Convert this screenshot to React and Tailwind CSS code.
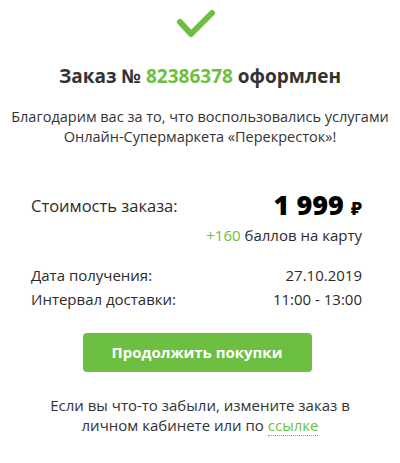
import React from 'react'

const font = { fontFamily: '"Open Sans", "Noto Sans", sans-serif' }

function Check() {
  return (
    <svg width="44" height="34" viewBox="0 0 44 34" className="block">
      <path d="M5 14 L16 26 L37 5" fill="none" stroke="#6cbf40" strokeWidth="6" strokeLinecap="round" strokeLinejoin="round" />
    </svg>
  )
}

function Row({ label, value }) {
  return (
    <div className="flex justify-between text-[15px] leading-6 text-[#2b2b2b]">
      <span>{label}</span>
      <span>{value}</span>
    </div>
  )
}

export default function App() {
  return (
    <div className="w-[400px] h-[463px] bg-white text-[#333]" style={font}>
      <div className="flex justify-center pt-[8px] pr-[6px]">
        <Check />
      </div>
      <h1 className="mt-[20px] text-center text-[19px] font-bold leading-7 text-[#333]">
        Заказ № <span className="text-[#6cbf40]">82386378</span> оформлен
      </h1>
      <p className="mt-[17px] text-center text-[14.5px] leading-5 text-[#333]">
        Благодарим вас за то, что воспользовались услугами<br />
        Онлайн-Супермаркета «Перекресток»!
      </p>

      <div className="mt-[42px] pl-[31px] pr-[38px] text-[#2b2b2b]">
        <div className="flex items-center justify-between">
          <span className="text-[16.5px]">Стоимость заказа:</span>
          <span className="text-[27px] font-extrabold leading-8 text-black">
            1 999 <span className="text-[18px]">₽</span>
          </span>
        </div>
        <div className="mt-[1px] text-right text-[15px] leading-5">
          <span className="text-[#6cbf40]">+160</span> баллов на карту
        </div>
        <div className="mt-[18px]">
          <Row label="Дата получения:" value="27.10.2019" />
          <Row label="Интервал доставки:" value="11:00 - 13:00" />
        </div>
      </div>

      <div className="mt-[22px] flex justify-center pr-[6px]">
        <button className="h-[39px] w-[229px] rounded-[4px] bg-[#6cbf40] text-[15px] font-bold text-white">
          Продолжить покупки
        </button>
      </div>

      <p className="mt-[23px] text-center text-[15px] leading-5 text-[#333]">
        Если вы что-то забыли, измените заказ в<br />
        личном кабинете или по{' '}
        <a className="text-[#6cbf40] border-b border-dotted border-[#6cbf40]">ссылке</a>
      </p>
    </div>
  )
}
